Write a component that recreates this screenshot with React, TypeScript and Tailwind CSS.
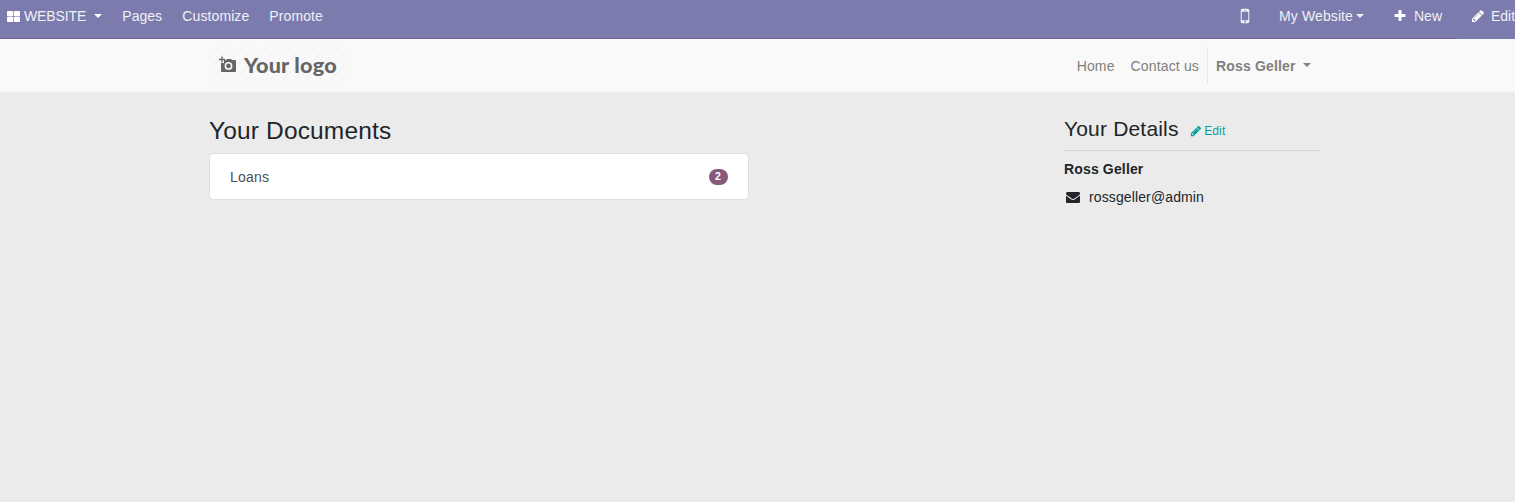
import React from 'react';

const icons = {
  mobile:
    'M976 1408q0-33-23.5-56.5t-56.5-23.5-56.5 23.5-23.5 56.5 23.5 56.5 56.5 23.5 56.5-23.5 23.5-56.5zm208-160v-704q0-13-9.5-22.5t-22.5-9.5h-512q-13 0-22.5 9.5t-9.5 22.5v704q0 13 9.5 22.5t22.5 9.5h512q13 0 22.5-9.5t9.5-22.5zm-192-848q0-16-16-16h-160q-16 0-16 16t16 16h160q16 0 16-16zm288-16v1024q0 52-38 90t-90 38h-512q-52 0-90-38t-38-90v-1024q0-52 38-90t90-38h512q52 0 90 38t38 90z',
  plus: 'M1600 736v192q0 40-28 68t-68 28h-416v416q0 40-28 68t-68 28h-192q-40 0-68-28t-28-68v-416h-416q-40 0-68-28t-28-68v-192q0-40 28-68t68-28h416v-416q0-40 28-68t68-28h192q40 0 68 28t28 68v416h416q40 0 68 28t28 68z',
  pencil:
    'M491 1536l91-91-235-235-91 91v107h128v128h107zm523-928q0-22-22-22-10 0-17 7l-542 542q-7 7-7 17 0 22 22 22 10 0 17-7l542-542q7-7 7-17zm-54-192l416 416-832 832h-416v-416zm683 96q0 53-37 90l-166 166-416-416 166-165q36-38 90-38 53 0 91 38l235 234q37 39 37 91z',
  envelope:
    'M1792 710v794q0 66-47 113t-113 47h-1472q-66 0-113-47t-47-113v-794q44 49 101 87 362 246 497 345 57 42 92.5 65.5t94.5 48 110 24.5h2q51 0 110-24.5t94.5-48 92.5-65.5q170-123 498-345 57-39 100-87zm0-294q0 79-49 151t-122 123q-376 261-468 325-10 7-42.5 31t-54 38-52 32.5-57.5 27-50 9h-2q-23 0-50-9t-57.5-27-52-32.5-54-38-42.5-31q-91-64-262-182.5t-205-142.5q-62-42-117-115.5t-55-136.5q0-78 41.5-130t118.5-52h1472q65 0 112.5 47t47.5 113z',
};

function Icon({ name, className }: { name: keyof typeof icons; className: string }) {
  return (
    <svg viewBox="0 0 1792 1792" fill="currentColor" className={`shrink-0 ${className}`} aria-hidden="true">
      <path d={icons[name]} />
    </svg>
  );
}

function GridIcon() {
  return (
    <svg viewBox="0 0 13 11" fill="currentColor" className="mb-px h-[11px] w-[13px] shrink-0" aria-hidden="true">
      <rect x="0" y="0" width="6.2" height="5.2" rx="0.8" />
      <rect x="6.8" y="0" width="6.2" height="5.2" rx="0.8" />
      <rect x="0" y="5.8" width="6.2" height="5.2" rx="0.8" />
      <rect x="6.8" y="5.8" width="6.2" height="5.2" rx="0.8" />
    </svg>
  );
}

function Caret({ className }: { className: string }) {
  return (
    <span
      className={`mb-[2px] inline-block h-0 w-0 border-x-4 border-t-4 border-x-transparent border-t-current ${className}`}
    />
  );
}

function Logo() {
  return (
    <a href="#" className="flex h-[37px] w-[139px] items-center bg-[repeating-linear-gradient(135deg,#f9f9f9_0px,#f9f9f9_6px,#f5f5f5_6.5px,#f5f5f5_8px,#f9f9f9_8.5px)] pl-[10px] text-[#666]">
      <svg viewBox="0 0 18 17" className="mb-[2px] h-[17px] w-[18px] shrink-0" aria-hidden="true">
        <path
          fill="currentColor"
          fillRule="evenodd"
          d="M2 7h3V4h2l1-1h4l1 1h3q1 0 1 1v10q0 1-1 1H3q-1 0-1-1V7zM9.5 6a3.9 3.9 0 1 0 0 7.8 3.9 3.9 0 0 0 0-7.8zm0 1.6a2.3 2.3 0 1 1 0 4.6 2.3 2.3 0 0 1 0-4.6z"
        />
        <path d="M0 3.5h6M3 .5v6" stroke="currentColor" strokeWidth="1.3" />
      </svg>
      <span className="mb-[2px] ml-[7px] origin-left scale-x-[1.08] font-[Lato,sans-serif] text-[20px] leading-[30px] font-black tracking-[0.2px] whitespace-nowrap">
        Your logo
      </span>
    </a>
  );
}

export default function App() {
  return (
    <div className="h-[502px] overflow-hidden bg-[#ebebeb] font-['Liberation_Sans',Arial,sans-serif] text-sm leading-[21px] text-[#212529]">
      <header className="flex h-[39px] justify-between bg-[#7c7bad] whitespace-nowrap text-[#f0f0f5]">
        <nav className="flex flex-1 items-start border-b border-[#6b5f9b] pt-[6px]">
          <a href="#" className="flex items-center pl-[7px] text-white">
            <GridIcon />
            <span className="ml-1 tracking-[-0.1px] text-[#f0f0f5]">WEBSITE</span>
            <Caret className="ml-2" />
          </a>
          <a href="#" className="ml-5 w-10">Pages</a>
          <a href="#" className="ml-5 w-[67px] tracking-[0.1px]">Customize</a>
          <a href="#" className="ml-5 tracking-[0.1px]">Promote</a>
        </nav>
        <nav className="flex items-start border-b border-[#6b5f9b] pt-[6px] pr-[15px]">
          <a href="#" aria-label="Mobile preview" className="flex h-[21px] items-center">
            <Icon name="mobile" className="mb-px h-5 w-5" />
          </a>
          <a href="#" className="ml-[24.5px] flex items-center">
            <span className="tracking-[0.1px]">My Website</span>
            <Caret className="ml-[3.5px]" />
          </a>
          <a href="#" className="ml-[29px] flex items-center">
            <Icon name="plus" className="mb-px h-[14px] w-[14px] text-white" />
            <span className="ml-[6.5px]">New</span>
          </a>
        </nav>
        <a href="#" className="flex w-[58px] items-start bg-[#7c7bad] pt-[6px] pl-[14px]">
          <Icon name="pencil" className="mt-[3px] h-[14px] w-[14px] text-white" />
          <span className="ml-[6px]">Edit</span>
        </a>
      </header>
      <div className="h-[53px] bg-[#f9f9f9] pr-[204px] pl-[209px]">
        <div className="flex h-full items-center justify-between text-[#808080]">
          <Logo />
          <nav className="flex h-[37px] items-center tracking-[0.15px]">
            <a href="#" className="px-2 pt-px">Home</a>
            <a href="#" className="px-2 pt-px">Contact us</a>
            <a href="#" className="flex h-full items-center border-l border-[#e6e6e6] pt-px pl-2 font-bold">
              Ross Geller
              <Caret className="ml-[7.5px]" />
            </a>
          </nav>
        </div>
      </div>
      <main className="flex justify-between pt-6 pr-[196px] pl-[209px]">
        <section className="w-[540px]">
          <h3 className="text-[24.5px] leading-[29px] tracking-[0.15px]">Your Documents</h3>
          <a href="#" className="mt-2 flex h-[47px] items-center justify-between rounded-[4px] border border-[#dfdfdf] bg-white px-5 text-[#495057]">
            <span className="pt-[2px] tracking-[0.2px]">Loans</span>
            <span className="flex h-4 w-[19px] items-center justify-center rounded-full bg-[#875a7b] pr-px text-[10.5px] leading-none font-bold text-white">
              2
            </span>
          </a>
        </section>
        <aside className="w-[255px]">
          <div className="flex h-[35px] items-baseline border-b border-[#d2d2d2]">
            <h4 className="text-[21px] leading-[26px] tracking-[0.18px]">Your Details</h4>
            <a href="#" className="relative top-px ml-[11.5px] flex items-center text-xs tracking-[0.15px] text-[#00a09d]">
              <Icon name="pencil" className="mr-[2px] h-3 w-3" />
              Edit
            </a>
          </div>
          <p className="mt-2 font-bold tracking-[0.15px]">Ross Geller</p>
          <p className="mt-[7px] flex items-center">
            <Icon name="envelope" className="mb-px ml-[2px] h-[14px] w-[14px]" />
            <span className="ml-[9px] tracking-[0.12px]">rossgeller@admin</span>
          </p>
        </aside>
      </main>
    </div>
  );
}
